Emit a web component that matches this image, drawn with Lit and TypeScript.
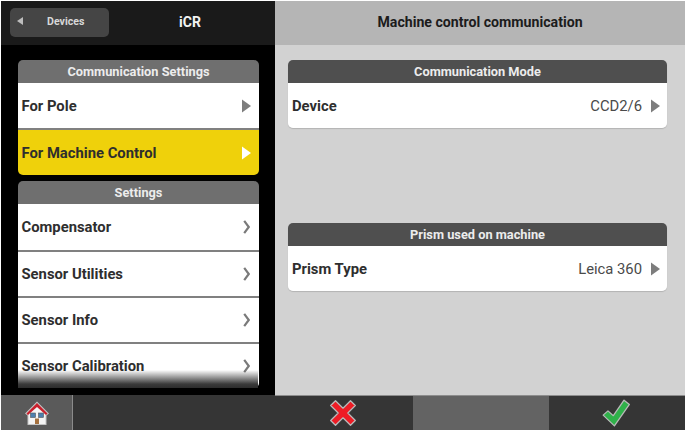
import { LitElement, css, html, svg } from 'lit';
import { customElement } from 'lit/decorators.js';

const triangle = svg`<path d="M0 0 L9 6.5 L0 13 Z" />`;
const chevron = svg`<path d="M1.2 0.8 L5.8 7 L1.2 13.2" fill="none" stroke-width="2.2" />`;

@customElement('app-root')
export class AppRoot extends LitElement {
  static override styles = css`
    :host {
      display: block;
      width: 688px;
      height: 430px;
      overflow: hidden;
      background: #fff;
      font-family: Roboto, "Liberation Sans", sans-serif;
      color: #2e2e2e;
    }
    .screen {
      display: grid;
      grid-template-columns: 274px 410px;
      height: 429px;
      margin-top: 1px;
      margin-left: 1px;
    }
    .left, .right { display: flex; flex-direction: column; min-height: 0; }
    .left { background: #000; }
    .right { background: #d2d2d2; }
    .head {
      height: 44px;
      flex: none;
      display: flex;
      align-items: center;
      box-sizing: border-box;
    }
    .left .head { background: #1a1a1a; padding-left: 9px; padding-bottom: 2px; }
    .right .head {
      background: #b5b5b5;
      justify-content: center;
      padding-bottom: 2px;
      font-size: 14.15px;
      font-weight: 700;
      color: #1c1c1c;
    }
    .back {
      width: 99px;
      height: 29px;
      box-sizing: border-box;
      background: #454545;
      border-radius: 5px;
      display: flex;
      align-items: center;
      padding: 0 0 2px 7px;
      color: #d8d8d8;
      font-size: 10.6px;
      font-weight: 700;
    }
    .back svg { width: 6px; height: 8px; fill: #bdbdbd; }
    .back span { margin-left: 24px; }
    .title {
      width: 162px;
      text-align: center;
      color: #f2f2f2;
      font-size: 14px;
      font-weight: 700;
    }
    .scroll {
      flex: 1;
      min-height: 0;
      padding: 15px 16px 7px 17px;
      display: flex;
      flex-direction: column;
      gap: 6px;
      overflow: hidden;
      position: relative;
    }
    .card { border-radius: 5px; overflow: hidden; flex: none; }
    .card-head {
      height: 23px;
      display: flex;
      align-items: center;
      justify-content: center;
      color: #ececec;
      font-size: 12.8px;
      font-weight: 700;
    }
    .left .card-head { background: #6f6f6f; }
    .right .card-head { background: #4f4f4f; }
    .row {
      height: 46px;
      box-sizing: border-box;
      background: #fff;
      display: flex;
      align-items: center;
      padding: 1px 8px 0 3.5px;
      font-size: 14.8px;
      font-weight: 700;
    }
    .row + .row { border-top: 2px solid #808080; }
    .row.short { height: 45px; }
    .row.tall { height: 47px; }
    .row.plain { padding-top: 0; }
    .row.active { background: #efd10b; }
    .row svg { margin-left: auto; width: 9px; height: 14px; fill: #7d7d7d; stroke: none; }
    .row.active svg { fill: #fff; }
    .row .chev { width: 8px; fill: none; stroke: #7a7a7a; }
    .value { margin-left: auto; font-weight: 400; font-size: 14.8px; color: #4a4a4a; }
    .value + svg { margin-left: 9px; }
    .fade {
      position: absolute;
      left: 17px;
      width: 240px;
      bottom: 7px;
      height: 18px;
      background: linear-gradient(to bottom, rgba(60, 60, 60, 0), #3a3a3a 78%, #2c2c2c);
    }
    .clip { height: 207px; }
    .body {
      flex: 1;
      min-height: 0;
      padding: 15px 18px 0 13px;
      display: flex;
      flex-direction: column;
      gap: 95px;
    }
    .body .row { padding: 1px 7px 0 4px; height: 45px; }
    .body .card { box-shadow: 0 1px 1px rgba(0, 0, 0, 0.15); }
    .foot {
      height: 35px;
      flex: none;
      background: #353535;
      display: flex;
      box-sizing: border-box;
    }
    .right .foot { border-top: 1px solid #8d8d8d; }
    .tab {
      display: flex;
      align-items: center;
      justify-content: center;
    }
    .home { width: 71px; background: #5a5a5a; border-right: 1px solid #8b8b8b; }
    .home svg { width: 26px; height: 26px; }
    .cancel, .ok { flex: 1; }
    .cancel { padding-right: 2px; }
    .ok { padding-right: 1px; }
    .mid { width: 136px; background: #636363; }
    .right .foot svg { width: 30px; height: 30px; }
  `;

  private _row(label: string, rowClass = '') {
    return html`<div class="row ${rowClass}">
      ${label}
      <svg viewBox="0 0 9 13">${triangle}</svg>
    </div>`;
  }

  private _chevRow(label: string) {
    return html`<div class="row plain">
      ${label}
      <svg class="chev" viewBox="0 0 8 14">${chevron}</svg>
    </div>`;
  }

  private _valueRow(label: string, value: string) {
    return html`<div class="row">
      ${label}<span class="value">${value}</span>
      <svg viewBox="0 0 9 13">${triangle}</svg>
    </div>`;
  }

  override render() {
    return html`
      <div class="screen">
        <section class="left">
          <div class="head">
            <div class="back">
              <svg viewBox="0 0 6 8"><path d="M6 0 V8 L0 4 Z" /></svg>
              <span>Devices</span>
            </div>
            <div class="title">iCR</div>
          </div>
          <div class="scroll">
            <div class="card">
              <div class="card-head">Communication Settings</div>
              ${this._row('For Pole', 'short')}
              ${this._row('For Machine Control', 'tall active')}
            </div>
            <div class="card clip">
              <div class="card-head">Settings</div>
              ${this._chevRow('Compensator')}
              ${this._chevRow('Sensor Utilities')}
              ${this._chevRow('Sensor Info')}
              ${this._chevRow('Sensor Calibration')}
            </div>
            <div class="fade"></div>
          </div>
          <div class="foot">
            <div class="tab home">
              <svg viewBox="0 0 26 26">
                <path d="M1 13.5 L13 1.5 L25 13.5 L22.5 15.5 V25 H3.5 V15.5 Z" fill="#c4c4c4" />
                <path d="M4.5 13 L13 5 L21.5 13 V24 H4.5 Z" fill="#f4f4f4" />
                <path d="M2.5 13.5 L13 3 L23.5 13.5 L22 15 L13 7 L4 15 Z" fill="#c8202c" />
                <rect x="6.5" y="13" width="5" height="4.5" fill="#4d7fae" stroke="#555" stroke-width="0.6" />
                <rect x="14.5" y="13" width="5" height="4.5" fill="#4d7fae" stroke="#555" stroke-width="0.6" />
                <rect x="11" y="18.5" width="4" height="5.5" fill="#a5713f" />
              </svg>
            </div>
          </div>
        </section>
        <section class="right">
          <div class="head">Machine control communication</div>
          <div class="body">
            <div class="card">
              <div class="card-head">Communication Mode</div>
              ${this._valueRow('Device', 'CCD2/6')}
            </div>
            <div class="card">
              <div class="card-head">Prism used on machine</div>
              ${this._valueRow('Prism Type', 'Leica 360')}
            </div>
          </div>
          <div class="foot">
            <div class="tab cancel">
              <svg viewBox="0 0 28 28">
                <path d="M7 2.5 L14 9.5 L21 2.5 L25.5 7 L18.5 14 L25.5 21 L21 25.5 L14 18.5 L7 25.5 L2.5 21 L9.5 14 L2.5 7 Z" fill="#ee1c25" stroke="#b9b9b9" stroke-width="1.2" stroke-linejoin="round" />
              </svg>
            </div>
            <div class="tab mid"></div>
            <div class="tab ok">
              <svg viewBox="0 0 28 28">
                <path d="M2 16 L6.5 12 L11.5 16.5 L21.5 2 L26.5 6 L12.5 26 Z" fill="#2fb14a" stroke="#b9b9b9" stroke-width="1.2" stroke-linejoin="round" />
              </svg>
            </div>
          </div>
        </section>
      </div>
    `;
  }
}

declare global {
  interface HTMLElementTagNameMap {
    'app-root': AppRoot;
  }
}
